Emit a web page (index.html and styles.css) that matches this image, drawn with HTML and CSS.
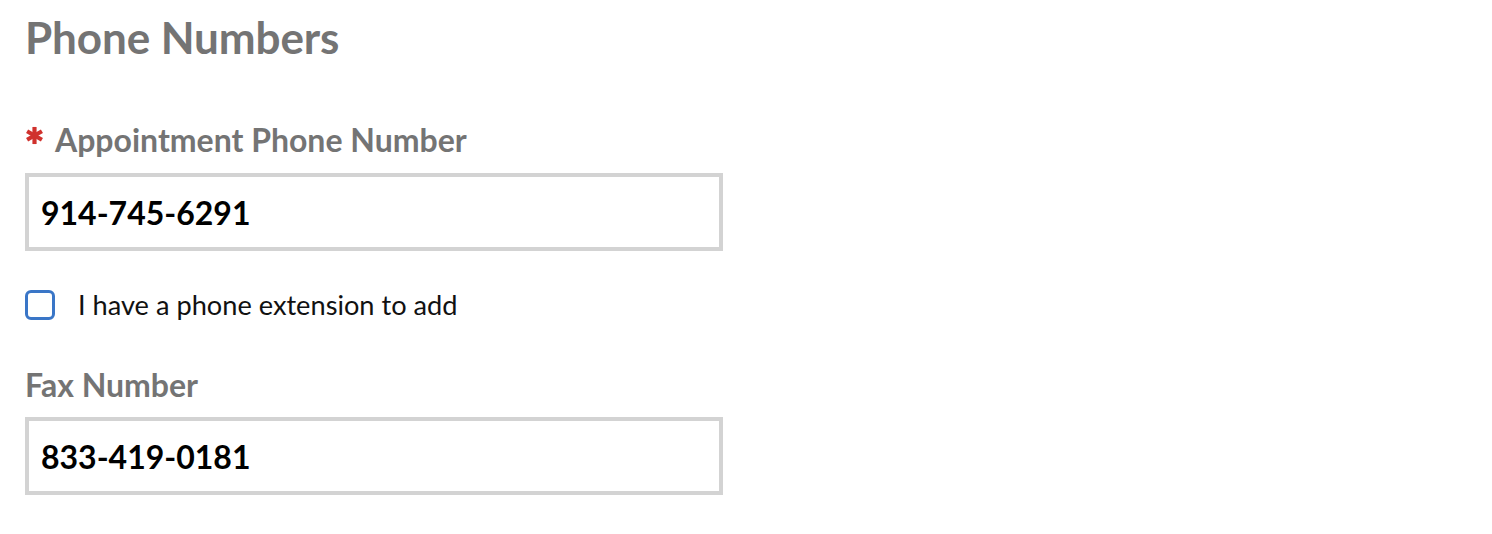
FILE: index.html
```html
<!DOCTYPE html>
<html>
<head>
<meta charset="utf-8">
<link rel="stylesheet" href="styles.css">
</head>
<body>
<section class="section">
  <h2 class="title">Phone Numbers</h2>
  <div class="field">
    <label class="label"><svg class="req" viewBox="0 0 20 20" width="19" height="19"><g stroke="#d0312d" stroke-width="4.4" stroke-linecap="butt"><line x1="10" y1="1" x2="10" y2="19"/><line x1="2.2" y1="5.5" x2="17.8" y2="14.5"/><line x1="2.2" y1="14.5" x2="17.8" y2="5.5"/></g></svg>Appointment Phone Number</label>
    <div class="input">914-745-6291</div>
  </div>
  <div class="check">
    <span class="box"></span>
    <span class="check-text">I have a phone extension to add</span>
  </div>
  <div class="field">
    <label class="label">Fax Number</label>
    <div class="input">833-419-0181</div>
  </div>
</section>
</body>
</html>
```
FILE: styles.css
```css
html, body { margin: 0; padding: 0; background: #fff; }
body { font-family: Lato, "Open Sans", sans-serif; }
.section { padding: 0 0 0 25px; width: 698px; display: flex; flex-direction: column; }
.title { margin: 10px 0 0; font-size: 44px; font-weight: 700; color: #747474; line-height: 54px; letter-spacing: -0.1px; }
.field { display: flex; flex-direction: column; }
.label { display: flex; align-items: center; gap: 11px; font-size: 32px; font-weight: 700; color: #747474; line-height: 36px; }
.req { margin-top: -10px; }
.input { box-sizing: border-box; height: 78px; border: 4px solid #d3d3d3; padding: 0 0 0 12px; display: flex; align-items: center; font-size: 32px; font-weight: 700; color: #000; }
.field:first-of-type { margin-top: 58px; }
.field:first-of-type .label { margin-bottom: 15px; }
.check { display: flex; align-items: center; gap: 23px; margin-top: 39px; }
.box { box-sizing: border-box; width: 30px; height: 30px; border: 3px solid #3a76c7; border-radius: 6px; }
.check-text { font-size: 27.2px; color: #111; line-height: 30px; }
.field:last-of-type { margin-top: 47px; }
.field:last-of-type .label { margin-bottom: 14px; }
```
